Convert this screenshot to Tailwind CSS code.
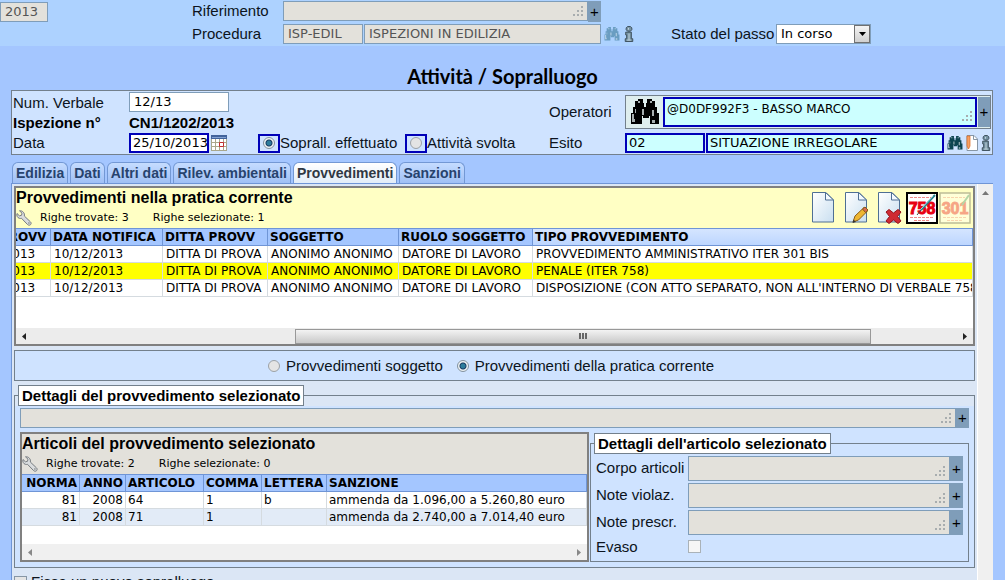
<!DOCTYPE html>
<html lang="it">
<head>
<meta charset="utf-8">
<title>Attività / Sopralluogo</title>
<script src="https://cdn.jsdelivr.net/npm/@tailwindcss/browser@4"></script>
</head>
<body class="flex h-screen flex-col overflow-hidden bg-[#a4c6ff] font-['Liberation_Sans',sans-serif] text-[15px] leading-5 text-[#0c1420]">

<svg class="absolute size-0" aria-hidden="true">
  <symbol id="binoculars" viewBox="0 0 30 26">
    <path fill="currentColor" d="M5 2h3V0h5v4h1v4h2V4h1V0h5v2h3v6h2v6h2v11h-9v-8h-1v2h-6v-2h-1v8H1V14h2V8h2z"/>
    <path fill="#dfe8ea" d="M2 15h2v8H2zM12 10h2v6h-2zM22 11h2v6h-2zM22 21h3v3h-3zM2 20h3v3H2zM8 2h2v2H8zM20 2h2v2h-2zM5 10h1v4H5z" opacity=".75"/>
  </symbol>
  <symbol id="info" viewBox="0 0 10 17">
    <path fill="#7593a4" stroke="#3b4d59" d="M3.500.5h3l1.500 1.500v2L6.500 5.500h-3L2 4V2zM1.500 6.500h6v7h1.500v3h-8v-3h1.500v-4h-1z"/>
    <path stroke="#c6d6df" d="M4.500 2v2M5 8v7M3 15h4" fill="none"/>
  </symbol>
  <symbol id="grip" viewBox="0 0 12 12">
    <path fill="#a8adaf" d="M9 1h2v2H9zM5 5h2v2H5zM9 5h2v2H9zM1 9h2v2H1zM5 9h2v2H5zM9 9h2v2H9z"/>
  </symbol>
  <symbol id="wrench" viewBox="0 0 16 16">
    <path fill="#d9dcde" stroke="#777c80" stroke-linejoin="round" d="M3.500.8 6 3.200 5.500 5.300 3.400 5.800 1 3.500C.4 5.500 1.300 7.700 3.300 8.300c1 .3 1.700.2 2.200 0l6 6.200c1 1 2.600.9 3.200 0 .7-.9.500-2-.300-2.700L8.300 6C9 3.500 7 .4 3.500.8z"/>
    <circle cx="12.900" cy="13" r=".8" fill="#777c80"/>
  </symbol>
  <linearGradient id="paper" x2="1" y2="1"><stop stop-color="#fff"/><stop offset="1" stop-color="#c9dff0"/></linearGradient>
  <symbol id="sheet" viewBox="0 0 26 32">
    <path fill="url(#paper)" stroke="#4e6f94" d="M1.500.5H15l7.500 7.500v22h-21z"/>
    <path fill="#f4faff" stroke="#4e6f94" d="M14.500.5V8h8z"/>
  </symbol>
</svg>

<header class="grid h-[46px] shrink-0 grid-cols-[192px_91px_318px_1fr] content-start gap-y-0.5 bg-[#add2ff] pt-px">
  <div><input aria-label="Anno" readonly value="2013" class="h-5 w-12 border border-[#7f9db9] bg-[#e3e1db] pl-1 font-['DejaVu_Sans',sans-serif] text-[13px] text-[#555]"></div>
  <label for="rif">Riferimento</label>
  <div class="flex">
    <div class="relative flex-1">
      <textarea id="rif" readonly class="block h-5 w-full resize-none border border-[#7f9db9] bg-[#e3e1db]"></textarea>
      <svg class="absolute top-1 right-1 size-3"><use href="#grip"/></svg>
    </div>
    <button class="w-[13px] bg-[#7f9db9] text-black">+</button>
  </div>
  <span></span>
  <span></span>
  <label for="proc">Procedura</label>
  <div class="flex gap-px">
    <input id="proc" readonly value="ISP-EDIL" class="h-5 w-20 border border-[#7f9db9] bg-[#e3e1db] pl-1 font-['DejaVu_Sans',sans-serif] text-[13px] text-[#555]">
    <input aria-label="Descrizione procedura" readonly value="ISPEZIONI IN EDILIZIA" class="h-5 min-w-0 flex-1 border border-[#7f9db9] bg-[#e3e1db] pl-1 font-['DejaVu_Sans',sans-serif] text-[13px] text-[#555]">
  </div>
  <div class="flex h-5 items-center">
    <button aria-label="Cerca procedura" class="ml-[3px] text-[#4d87a8] opacity-70"><svg class="h-3.5 w-4"><use href="#binoculars"/></svg></button>
    <button aria-label="Informazioni procedura" class="ml-1"><svg class="h-4 w-2.5"><use href="#info"/></svg></button>
    <label for="stato" class="ml-[37px] w-[105px]">Stato del passo</label>
    <div class="relative">
      <select id="stato" class="block h-5 w-[95px] appearance-none border border-[#7f9db9] bg-white pl-1 font-['DejaVu_Sans',sans-serif] text-[13px] leading-4 text-black"><option>In corso</option></select>
      <span class="pointer-events-none absolute inset-y-px right-px flex w-4 items-center justify-center border border-[#707070] bg-gradient-to-b from-[#f4f4f4] to-[#d0d0d0]"><svg class="h-1 w-[7px]" viewBox="0 0 7 4"><path d="M0 0h7L3.500 4z"/></svg></span>
    </div>
  </div>
</header>

<h1 class="mt-4 h-7 shrink-0 text-center font-['Lato',sans-serif] text-[20px] leading-7 font-bold text-black">Attività / Sopralluogo</h1>

<main class="mr-3 ml-[11px] flex min-h-0 flex-1 flex-col">
  <section class="flex shrink-0 justify-between border border-[#73808c] bg-[#cfe3ff] pl-px">
    <div class="grid grid-cols-[116px_129px_147px_120px] content-start">
      <label for="verb" class="pt-0.5">Num. Verbale</label>
      <input id="verb" value="12/13" class="mt-px h-5 w-[100px] border border-[#7f9db9] bg-white pl-1 font-['DejaVu_Sans',sans-serif] text-[13px] text-black">
      <span class="col-span-2"></span>
      <b class="text-black">Ispezione n°</b><b class="text-black">CN1/1202/2013</b>
      <span class="col-span-2"></span>
      <label for="data">Data</label>
      <div class="flex items-center gap-0.5">
        <input id="data" value="25/10/2013" class="h-5 w-20 border-2 border-[#0000b8] bg-white pl-0.5 font-['DejaVu_Sans',sans-serif] text-[13px] text-black">
        <button aria-label="Calendario"><svg class="size-4" viewBox="0 0 16 16"><path fill="#fff" d="M0 0h16v15H0z"/><path stroke="#a9a78c" d="M.5 4v11.500M4.500 4v11M8.500 4v11M12.500 4v11M15.500 4v12M0 7.500h16M0 11.500h16M0 15.500h16" fill="none"/><path fill="#41639c" d="M0 0h16v4H0z"/><path fill="#83a2d3" d="M1 2h14v1H1z"/><path stroke="#c22f2f" fill="none" d="M8.500 7.500h4v4h-4z"/></svg></button>
      </div>
      <div class="flex items-center">
        <span class="flex h-[19px] w-[22px] items-center justify-center border-2 border-[#0000b8]"><input id="eff" name="tipo" type="radio" checked class="size-3 appearance-none rounded-full border border-[#83929e] bg-[radial-gradient(circle,#2d7d9c_0_2px,#183b62_3px,#eef3f5_4px)]"></span>
        <label for="eff" class="whitespace-nowrap">Soprall. effettuato</label>
      </div>
      <div class="flex items-center">
        <span class="flex h-[19px] w-[22px] items-center justify-center border-2 border-[#0000b8]"><input id="svolta" name="tipo" type="radio" class="size-3 appearance-none rounded-full border border-[#9ba1a6] bg-[#e4e4e4]"></span>
        <label for="svolta" class="whitespace-nowrap">Attività svolta</label>
      </div>
    </div>
    <div class="grid grid-cols-[76px_367px]">
      <label for="oper" class="pt-[11px]">Operatori</label>
      <div class="mt-1 mr-px flex h-[34px] border border-[#73808c] bg-[#dfeeee]">
        <button aria-label="Cerca operatori" class="flex w-[37px] items-center justify-center text-black"><svg class="h-[26px] w-[30px]"><use href="#binoculars"/></svg></button>
        <div class="relative flex-1 py-px">
          <textarea id="oper" class="block h-[30px] w-full resize-none border-2 border-[#0000b8] bg-[#ccffff] pt-px pl-0.5 font-['DejaVu_Sans',sans-serif] text-[12px] leading-[18px] text-black">@D0DF992F3 - BASSO MARCO</textarea>
          <svg class="absolute right-1 bottom-1.5 size-3"><use href="#grip"/></svg>
        </div>
        <button class="my-px ml-px w-3 bg-[#7f9db9] text-black">+</button>
      </div>
      <label for="esito" class="pt-1">Esito</label>
      <div class="mt-1 mb-px flex items-center gap-px">
        <input id="esito" value="02" class="h-5 w-20 border-2 border-[#0000b8] bg-[#ccffff] pl-0.5 font-['DejaVu_Sans',sans-serif] text-[13px] text-black">
        <input aria-label="Descrizione esito" value="SITUAZIONE IRREGOLARE" class="h-5 min-w-0 flex-1 border-2 border-[#0000b8] bg-[#ccffff] pl-0.5 font-['DejaVu_Sans',sans-serif] text-[13px] text-black">
        <button aria-label="Cerca esito" class="ml-0.5 text-[#0d4551]"><svg class="h-3.5 w-4"><use href="#binoculars"/></svg></button>
        <button aria-label="Modifica esito" class="ml-0.5"><svg class="h-4 w-3" viewBox="0 0 12 16"><path fill="#fff" stroke="#8796a5" d="M1 .5h7L11.500 4v11.500H1z"/><path fill="none" stroke="#8796a5" d="M7.500.5v4h4"/><path fill="#f5a165" stroke="#d9671f" stroke-width=".7" d="M1 1h3v10l-1.500 3L1 11z"/></svg></button>
        <button aria-label="Informazioni esito" class="mr-px ml-0.5"><svg class="h-4 w-2.5"><use href="#info"/></svg></button>
      </div>
    </div>
  </section>

  <nav class="mt-[7px] ml-px flex h-[21px] shrink-0 gap-0.5 text-sm font-bold text-[#27436d]">
    <button class="rounded-t-md border border-b-0 border-[#7398d4] bg-gradient-to-b from-[#c5dcff] to-[#a0c0f5] px-[3px]">Edilizia</button>
    <button class="rounded-t-md border border-b-0 border-[#7398d4] bg-gradient-to-b from-[#c5dcff] to-[#a0c0f5] px-[3px]">Dati</button>
    <button class="rounded-t-md border border-b-0 border-[#7398d4] bg-gradient-to-b from-[#c5dcff] to-[#a0c0f5] px-[3px]">Altri dati</button>
    <button class="rounded-t-md border border-b-0 border-[#7398d4] bg-gradient-to-b from-[#c5dcff] to-[#a0c0f5] px-[3px]">Rilev. ambientali</button>
    <button class="rounded-t-md border border-b-0 border-[#7398d4] bg-gradient-to-b from-white to-[#e3edf8] px-[3px] text-[#303843]">Provvedimenti</button>
    <button class="rounded-t-md border border-b-0 border-[#7398d4] bg-gradient-to-b from-[#c5dcff] to-[#a0c0f5] px-[3px]">Sanzioni</button>
  </nav>

  <div class="flex min-h-0 flex-1 overflow-hidden border-t border-l border-[#6f95d6] bg-[#dbe6f5]">
    <div class="min-w-0 flex-1 px-0.5 pt-0.5">

      <section class="flex h-40 flex-col border-2 border-[#808080] bg-white">
        <div class="flex h-10 shrink-0 justify-between bg-[#ffffc4]">
          <div>
            <h2 class="text-base leading-5 font-bold text-black">Provvedimenti nella pratica corrente</h2>
            <div class="flex items-center font-['DejaVu_Sans',sans-serif] text-[11px] text-black">
              <button aria-label="Opzioni"><svg class="size-4"><use href="#wrench"/></svg></button>
              <span class="ml-2">Righe trovate: 3</span><span class="ml-6">Righe selezionate: 1</span>
            </div>
          </div>
          <div class="flex items-start gap-px pt-1 pr-0.5">
            <button aria-label="Nuovo" class="mr-1.5"><svg class="h-8 w-[26px]"><use href="#sheet"/></svg></button>
            <button aria-label="Modifica" class="mr-1.5"><svg class="h-8 w-[26px]" viewBox="0 0 26 32"><use href="#sheet" width="26" height="32"/><path fill="#edb632" stroke="#8a5d17" d="m9 30 2-6 9-8.500 3.500 3.500-9 9z"/><path fill="#d86b52" stroke="#8a5d17" d="m18.500 17 2.500-2 3 3-2.500 2.500z"/><path fill="#333" d="m8.500 31 1-3.500L12 30z"/></svg></button>
            <button aria-label="Elimina" class="mr-0.5"><svg class="h-8 w-[26px]" viewBox="0 0 26 32"><use href="#sheet" width="26" height="32"/><path fill="#cf2a33" stroke="#941219" stroke-linejoin="round" d="m9 20 3-2.500 4.500 3.500 4.500-3.500 3 2.500-3.500 4.500 3.500 4.500-3 2.500-4.500-3.500-4.500 3.500L9 29l3.500-4.500z"/></svg></button>
            <button aria-label="Iter 758"><svg class="size-8" viewBox="0 0 32 32"><path fill="#fff" stroke="#000" stroke-width="2" d="M1 1h30v30H1z"/><path stroke="#e88" stroke-dasharray="3 1" d="M4 5.500h22M4 25.500h24M8 28.500h15"/><text x="16" y="22" text-anchor="middle" font-family="Liberation Sans, sans-serif" font-weight="bold" font-size="16" fill="#e80012" stroke="#e80012">758</text><path stroke="#247f8c" stroke-width="2" d="M29 3 15 18"/><path stroke="#a8d8dc" d="m27 4-12 13"/><path stroke="#444" d="m15 18-4 5"/></svg></button>
            <button aria-label="Iter 301" disabled class="opacity-35"><svg class="size-8" viewBox="0 0 32 32"><path fill="#fff" stroke="#444" stroke-width="1.500" d="M1 1h30v30H1z"/><path stroke="#e88" stroke-dasharray="3 1" d="M4 5.500h22M4 25.500h24M8 28.500h15"/><text x="16" y="22" text-anchor="middle" font-family="Liberation Sans, sans-serif" font-weight="bold" font-size="16" fill="#e80012" stroke="#e80012">301</text><path stroke="#2b8b70" stroke-width="2" d="m30 3-7 10"/></svg></button>
          </div>
        </div>
        <div class="flex-1 overflow-hidden">
          <table class="-ml-[57px] w-[calc(100%_+_57px)] table-fixed border-separate border-spacing-0 font-['DejaVu_Sans',sans-serif] text-[12px] leading-4 text-black [&_td]:overflow-hidden [&_td]:border-r [&_td]:border-b [&_td]:border-[#d5dbe0] [&_td]:pl-[3px] [&_td]:whitespace-nowrap [&_td:first-child]:pl-[7px] [&_th]:overflow-hidden [&_th]:border-y [&_th]:border-r [&_th]:border-[#6f95d6] [&_th]:pl-[2px] [&_th]:text-left [&_th]:whitespace-nowrap">
            <colgroup><col class="w-[92px]"><col class="w-[112px]"><col class="w-[105px]"><col class="w-[131px]"><col class="w-[134px]"><col></colgroup>
            <thead><tr class="h-[18px] bg-[#a4c6ff]"><th>DATA PROVV</th><th>DATA NOTIFICA</th><th>DITTA PROVV</th><th>SOGGETTO</th><th>RUOLO SOGGETTO</th><th class="bg-gradient-to-b from-[#d5e5ff] to-[#bdd6ff]">TIPO PROVVEDIMENTO</th></tr></thead>
            <tbody>
              <tr><td>10/12/2013</td><td>10/12/2013</td><td>DITTA DI PROVA</td><td>ANONIMO ANONIMO</td><td>DATORE DI LAVORO</td><td>PROVVEDIMENTO AMMINISTRATIVO ITER 301 BIS</td></tr>
              <tr class="bg-[#ffff00]"><td>10/12/2013</td><td>10/12/2013</td><td>DITTA DI PROVA</td><td>ANONIMO ANONIMO</td><td>DATORE DI LAVORO</td><td>PENALE (ITER 758)</td></tr>
              <tr><td>10/12/2013</td><td>10/12/2013</td><td>DITTA DI PROVA</td><td>ANONIMO ANONIMO</td><td>DATORE DI LAVORO</td><td>DISPOSIZIONE (CON ATTO SEPARATO, NON ALL'INTERNO DI VERBALE 758)</td></tr>
            </tbody>
          </table>
        </div>
        <div class="flex h-4 shrink-0 items-center bg-[#ececec]">
          <span class="flex w-4 justify-center"><svg class="h-[7px] w-1" viewBox="0 0 4 7"><path d="M4 0v7L0 3.500z" fill="#222"/></svg></span>
          <span class="grow-[264]"></span>
          <span class="flex h-[15px] grow-[568] items-center justify-center gap-px border border-[#989898] bg-gradient-to-b from-[#f3f3f3] to-[#c9c9c9]"><i class="h-1.5 w-0.5 bg-[#666]"></i><i class="h-1.5 w-0.5 bg-[#666]"></i><i class="h-1.5 w-0.5 bg-[#666]"></i></span>
          <span class="grow-[86]"></span>
          <span class="flex w-4 justify-center"><svg class="h-[7px] w-1" viewBox="0 0 4 7"><path d="M0 0v7l4-3.500z" fill="#222"/></svg></span>
        </div>
      </section>

      <div class="mt-1 flex h-[31px] items-center border border-[#73808c] bg-[#cfe3ff] pl-[253px]">
        <input id="ps" name="vista" type="radio" class="size-3 appearance-none rounded-full border border-[#9ba1a6] bg-[#e4e4e4]">
        <label for="ps" class="ml-1.5">Provvedimenti soggetto</label>
        <input id="pc" name="vista" type="radio" checked class="ml-3.5 size-3 appearance-none rounded-full border border-[#83929e] bg-[radial-gradient(circle,#2d7d9c_0_2px,#183b62_3px,#eef3f5_4px)]">
        <label for="pc" class="ml-1.5">Provvedimenti della pratica corrente</label>
      </div>

      <fieldset class="mt-1 min-w-0 border border-[#73808c] bg-[linear-gradient(#dbe6f5_10px,#cfe3ff_10px)] px-[5px] pt-0.5 pb-[5px]">
        <legend class="-ml-0.5 h-[21px] border border-[#73808c] bg-white px-[3px] leading-5 font-bold text-black">Dettagli del provvedimento selezionato</legend>
        <div class="flex">
          <div class="relative flex-1">
            <textarea aria-label="Dettagli del provvedimento" readonly class="block h-5 w-full resize-none border border-[#7f9db9] bg-[#e3e1db]"></textarea>
            <svg class="absolute top-1 right-1 size-3"><use href="#grip"/></svg>
          </div>
          <button class="w-[13px] bg-[#7f9db9] text-black">+</button>
        </div>

        <div class="mt-1 flex gap-px">
          <section class="flex h-[130px] w-[569px] shrink-0 flex-col border-2 border-[#808080] bg-white">
            <div class="h-10 shrink-0 bg-[#e3e1db]">
              <h2 class="text-base leading-5 font-bold text-black">Articoli del provvedimento selezionato</h2>
              <div class="flex items-center font-['DejaVu_Sans',sans-serif] text-[11px] text-black">
                <button aria-label="Opzioni"><svg class="size-4"><use href="#wrench"/></svg></button>
                <span class="ml-2">Righe trovate: 2</span><span class="ml-6">Righe selezionate: 0</span>
              </div>
            </div>
            <div class="flex-1 overflow-hidden">
              <table class="w-full table-fixed border-separate border-spacing-0 font-['DejaVu_Sans',sans-serif] text-[12px] leading-4 text-black [&_td]:border-r [&_td]:border-b [&_td]:border-[#d5dbe0] [&_td]:px-0.5 [&_td]:whitespace-nowrap [&_th]:border-y [&_th]:border-r [&_th]:border-[#6f95d6] [&_th]:px-0.5 [&_th]:text-left [&_th]:whitespace-nowrap">
                <colgroup><col class="w-[58px]"><col class="w-[46px]"><col class="w-[78px]"><col class="w-[58px]"><col class="w-[65px]"><col></colgroup>
                <thead><tr class="h-[18px] bg-[#a4c6ff]"><th class="text-right!">NORMA</th><th class="text-right!">ANNO</th><th>ARTICOLO</th><th>COMMA</th><th>LETTERA</th><th>SANZIONE</th></tr></thead>
                <tbody>
                  <tr><td class="text-right">81</td><td class="text-right">2008</td><td>64</td><td>1</td><td>b</td><td>ammenda da 1.096,00 a 5.260,80 euro</td></tr>
                  <tr class="bg-[#e2ebf7]"><td class="text-right">81</td><td class="text-right">2008</td><td>71</td><td>1</td><td></td><td>ammenda da 2.740,00 a 7.014,40 euro</td></tr>
                </tbody>
              </table>
            </div>
            <div class="flex h-4 shrink-0 items-center justify-between bg-[#f0f0f0] px-1.5">
              <svg class="h-[7px] w-1" viewBox="0 0 4 7"><path d="M4 0v7L0 3.500z" fill="#888"/></svg>
              <svg class="h-[7px] w-1" viewBox="0 0 4 7"><path d="M0 0v7l4-3.500z" fill="#888"/></svg>
            </div>
          </section>

          <fieldset class="mt-px min-w-0 flex-1 border border-[#73808c] px-[5px] pt-0.5 pb-1.5">
            <legend class="-ml-0.5 h-[21px] border border-[#73808c] bg-white px-[3px] leading-5 font-bold text-black">Dettagli dell'articolo selezionato</legend>
            <div class="grid grid-cols-[92px_1fr_13px] gap-y-0.5">
              <label for="corpo" class="pt-0.5">Corpo articoli</label>
              <div class="relative"><textarea id="corpo" readonly class="block h-[25px] w-full resize-none border border-[#7f9db9] bg-[#e3e1db]"></textarea><svg class="absolute right-1 bottom-1 size-3"><use href="#grip"/></svg></div>
              <button class="bg-[#7f9db9] text-black">+</button>
              <label for="viol" class="pt-0.5">Note violaz.</label>
              <div class="relative"><textarea id="viol" readonly class="block h-[25px] w-full resize-none border border-[#7f9db9] bg-[#e3e1db]"></textarea><svg class="absolute right-1 bottom-1 size-3"><use href="#grip"/></svg></div>
              <button class="bg-[#7f9db9] text-black">+</button>
              <label for="presc" class="pt-0.5">Note prescr.</label>
              <div class="relative"><textarea id="presc" readonly class="block h-[25px] w-full resize-none border border-[#7f9db9] bg-[#e3e1db]"></textarea><svg class="absolute right-1 bottom-1 size-3"><use href="#grip"/></svg></div>
              <button class="bg-[#7f9db9] text-black">+</button>
              <label for="evaso" class="h-[18px]">Evaso</label>
              <input id="evaso" type="checkbox" class="mt-[3px] size-[13px] appearance-none border border-[#aab2b8] bg-[#f6f6f6]">
            </div>
          </fieldset>
        </div>
      </fieldset>

      <div class="mt-1 flex items-center gap-1">
        <input id="fissa" type="checkbox" class="size-[13px] appearance-none border border-[#8796a5] bg-[#e4e4e4]">
        <label for="fissa">Fissa un nuovo sopralluogo</label>
      </div>
    </div>
    <div class="flex w-4 shrink-0 justify-center border-l border-white bg-[#f0f0f0] pt-[7px]"><svg class="h-1 w-[7px]" viewBox="0 0 7 4"><path d="M0 4h7L3.500 0z" fill="#777"/></svg></div>
  </div>
</main>
</body>
</html>
